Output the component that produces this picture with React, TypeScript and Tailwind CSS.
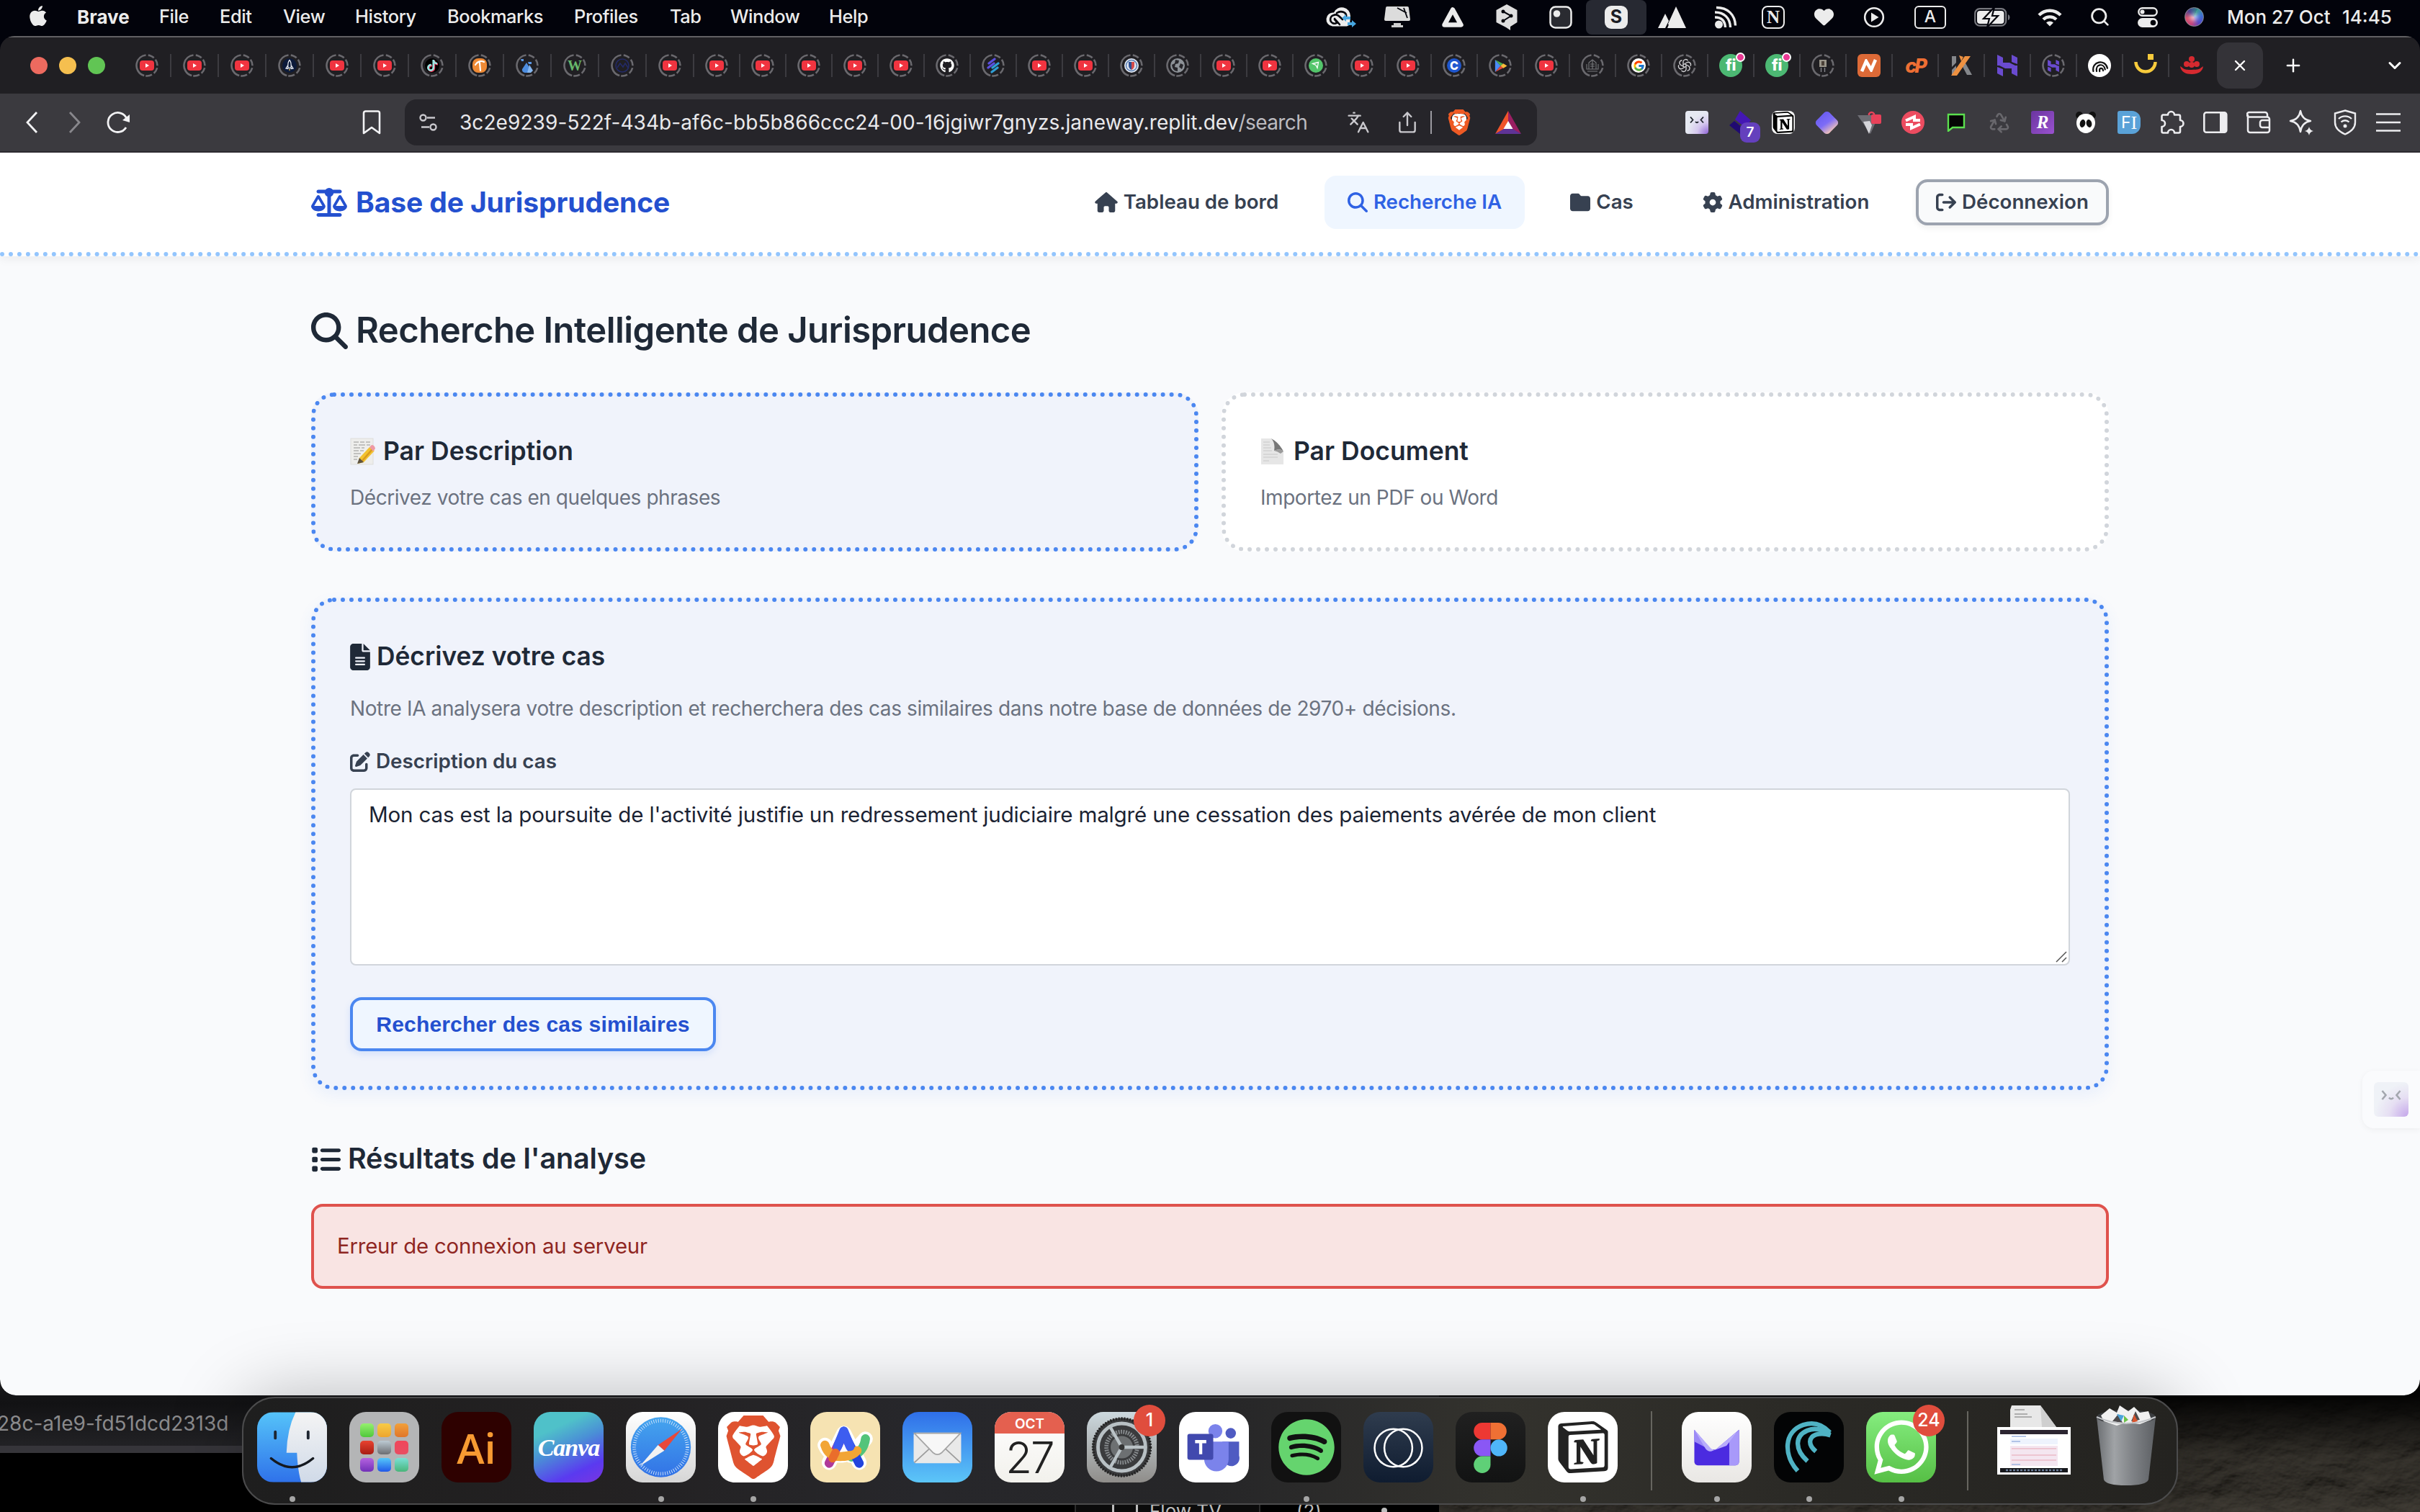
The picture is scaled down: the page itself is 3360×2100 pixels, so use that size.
import type { ReactNode } from "react";
import {
  FaApple, FaBrave, FaGithub, FaTiktok, FaScaleBalanced, FaMagnifyingGlass, FaHouse, FaFolder, FaGear,
  FaArrowRightFromBracket, FaFileLines, FaPenToSquare, FaList, FaWhatsapp, FaSpotify, FaHeart,
} from "react-icons/fa6";
import { FcGoogle } from "react-icons/fc";
import { SiNotion } from "react-icons/si";
import { ChevronDown, Globe, Languages, Plus, Puzzle, Recycle, Search, Share, Wallet, X } from "lucide-react";

/* ---------- macOS menu bar ---------- */

const MENUS: [string, string][] = [
  ["File", "w-[84px]"],
  ["Edit", "w-[88px]"],
  ["View", "w-[100px]"],
  ["History", "w-[128px]"],
  ["Bookmarks", "w-[176px]"],
  ["Profiles", "w-[133px]"],
  ["Tab", "w-[84px]"],
  ["Window", "w-[137px]"],
  ["Help", "w-[60px]"],
];

function Slot({ className, children }: { className: string; children: ReactNode }) {
  return <span className={`flex h-[50px] w-11 shrink-0 items-center justify-center ${className}`}>{children}</span>;
}

function MenuBar() {
  return (
    <div className="flex h-[50px] shrink-0 items-center bg-[#02030b] pr-[39px] pb-[3px] text-[#ececec]">
      <FaApple className="mb-1 ml-[37px] h-8 w-8" />
      <span className="ml-[38px] w-[114px] text-[26px] font-bold">Brave</span>
      {MENUS.map(([label, width]) => (
        <span key={label} className={`${width} shrink-0 text-[25.4px] font-medium tracking-[-0.4px]`}>{label}</span>
      ))}
      <div className="ml-auto flex items-center">
        <Slot className="">
          <svg viewBox="0 0 44 32" className="h-8 w-11" fill="none">
            <path d="M10 28.500a9 9 0 0 1 2-19 12 12 0 0 1 23 5l-1 12-4 2z" fill="#ececec" />
            <path d="M12 13a6 6 0 0 0-2 11c5 2 8 0 3-5m-1-6c4-2 7 1 12 6M16 10c6-4 14-1 13 5M20 26l-7-8" stroke="#02030b" strokeWidth="2.600" strokeLinecap="round" />
            <path d="M23 17l6-5v3h6v4h-6v3z" fill="#47a6e0" />
            <path d="M43 25l-6-5v3h-6v4h6v3z" fill="#47a6e0" />
          </svg>
        </Slot>
        <Slot className="ml-[34px]">
          <svg viewBox="0 0 36 30" className="h-[30px] w-9">
            <path d="M4 0h28a2 2 0 0 1 2 2l2 16a2 2 0 0 1-2 2H2a2 2 0 0 1-2-2L2 2a2 2 0 0 1 2-2z" fill="#dcdcdc" />
            <path d="M13 23h10v3h3v3H10v-3h3z" fill="#cfcfcf" />
            <path d="M18 2l13 7M27 2l5 14" stroke="#02030b" strokeWidth="1.800" fill="none" />
          </svg>
        </Slot>
        <Slot className="ml-[33px]">
          <svg viewBox="0 0 32 30" className="h-[30px] w-8">
            <path d="M16 4.500L27.500 25.500H4.500z" fill="none" stroke="#ececec" strokeWidth="6.500" strokeLinejoin="round" />
          </svg>
        </Slot>
        <Slot className="ml-[31px]">
          <svg viewBox="0 0 32 38" className="h-[38px] w-8">
            <path d="M16 1l14.500 8v17L21 32v5l-6-4L1.500 26V9z" fill="#dedede" />
            <path d="M11 11l11 6-11 7" fill="none" stroke="#02030b" strokeWidth="2" />
            <circle cx="11" cy="11" r="2.500" fill="#02030b" /><circle cx="22" cy="17" r="2.500" fill="#02030b" /><circle cx="11" cy="24" r="2.500" fill="#02030b" />
          </svg>
        </Slot>
        <Slot className="ml-[31px]">
          <svg viewBox="0 0 32 32" className="h-8 w-8">
            <rect x="1.500" y="1.500" width="29" height="29" rx="7" fill="#2a2b31" stroke="#ececec" strokeWidth="2.500" />
            <circle cx="10.500" cy="11" r="4.800" fill="#ececec" />
          </svg>
        </Slot>
        <span className="ml-[13px] flex h-[48px] w-[84px] items-center justify-center rounded-lg bg-[#272932]">
          <span className="flex h-8 w-8 items-center justify-center rounded-[9px] bg-[#ececec] text-[25px] font-bold text-[#1c1d24]">S</span>
        </span>
        <Slot className="ml-[14px]">
          <svg viewBox="0 0 40 30" className="h-[30px] w-10">
            <path d="M25 0l14 30H17l-3-6zM10 10l5 10-5 10H0zM15.500 24l2.500 6h-5z" fill="#ececec" />
          </svg>
        </Slot>
        <Slot className="ml-[30px]">
          <svg viewBox="0 0 32 32" className="h-8 w-8" fill="none" stroke="#ececec" strokeWidth="3.400">
            <circle cx="6.500" cy="26" r="5.500" fill="#ececec" stroke="none" />
            <path d="M1 16c9 0 14 5 14.500 14M1 9c13 0 21 8 21.500 21M3 2.500c16 0 26 10 26.500 25" />
          </svg>
        </Slot>
        <Slot className="ml-[22px]">
          <span className="flex h-8 w-8 items-center justify-center rounded-lg border-[2.500px] border-[#ececec] font-['Liberation_Serif'] text-[25px] font-bold">N</span>
        </Slot>
        <Slot className="ml-[26px]"><FaHeart className="h-[27px] w-[27px]" /></Slot>
        <Slot className="ml-[26px]">
          <svg viewBox="0 0 30 30" className="h-[30px] w-[30px]"><circle cx="15" cy="15" r="12.800" fill="none" stroke="#ececec" strokeWidth="2.600" /><path d="M11 8.500v13L21.500 15z" fill="#ececec" /></svg>
        </Slot>
        <Slot className="ml-[34px]">
          <span className="flex h-8 w-11 items-center justify-center rounded-[6px] border-[2.500px] border-[#ececec] text-[23px] font-medium">A</span>
        </Slot>
        <Slot className="ml-[42px]">
          <svg viewBox="0 0 50 26" className="h-[26px] w-[50px] shrink-0 overflow-visible">
            <rect x="1.200" y="1.200" width="43" height="23.500" rx="6.500" fill="none" stroke="#77787e" strokeWidth="2.200" />
            <path d="M47 9v8q2.500-1 2.500-4T47 9z" fill="#77787e" />
            <rect x="4" y="4" width="37.500" height="18" rx="4" fill="#ececec" />
            <path d="M28-1L13 15h8l-3 12 15-16h-8z" fill="#ececec" stroke="#02030b" strokeWidth="2.200" />
          </svg>
        </Slot>
        <Slot className="ml-9">
          <svg viewBox="0 0 34 26" className="h-[26px] w-[34px]" fill="none" stroke="#ececec" strokeWidth="4.400">
            <path d="M2 10a21 21 0 0 1 30 0M8 16a13 13 0 0 1 18 0" /><path d="M17 25.500l-5-5a7 7 0 0 1 10 0z" fill="#ececec" stroke="none" />
          </svg>
        </Slot>
        <Slot className="ml-[25px]"><Search className="h-[29px] w-[29px]" strokeWidth={2.300} /></Slot>
        <Slot className="ml-[23px]">
          <svg viewBox="0 0 28 28" className="h-7 w-7">
            <rect x="1.300" y="1.300" width="25.400" height="10.400" rx="5.200" fill="none" stroke="#ececec" strokeWidth="2.400" /><circle cx="6.500" cy="6.500" r="3" fill="#ececec" />
            <rect y="15" width="28" height="13" rx="6.500" fill="#ececec" /><circle cx="21.500" cy="21.500" r="3.800" fill="#02030b" />
          </svg>
        </Slot>
        <Slot className="ml-5">
          <span className="flex h-[27px] w-[27px] items-center justify-center rounded-full border border-[#8b8f98] bg-[conic-gradient(from_20deg,#3b9a8c,#3d6fd6,#5146c4,#c23f78,#d8506a,#4a3f8e,#2d7f8c)]">
            <span className="h-2.5 w-2.5 rounded-full bg-white/80 blur-[3px]" />
          </span>
        </Slot>
        <span className="ml-6 w-40 text-[26px] font-medium">Mon 27 Oct</span>
        <span className="w-[69px] text-[26px] font-medium">14:45</span>
      </div>
    </div>
  );
}

/* ---------- browser tabs ---------- */

function YouTube() {
  return <svg viewBox="0 0 20 14" className="h-3.5 w-5"><rect width="20" height="14" rx="4" fill="#f03440" /><path d="M8 4v6l5-3z" fill="#fff" /></svg>;
}

function HMark() {
  return <svg viewBox="0 0 28 30" className="h-full w-full" fill="#6a4bd0"><path d="M0 0l8 4v7h9l8 4H0zM28 30l-8-4v-7h-9l-8-4h25zM20 0l8 4v9l-8-3zM0 17l8 3v10l-8-4z" /></svg>;
}

function Favicon({ kind }: { kind: string }) {
  switch (kind) {
    case "yt": return <YouTube />;
    case "rocket": return <svg viewBox="0 0 20 20" className="h-5 w-5"><circle cx="10" cy="10" r="10" fill="#0c1a3a" /><path d="M10 2.500c3 3 2.500 7 2 11H8c-.5-4-1-8 2-11zM7.500 10L5 14l3 .5M12.500 10l2.500 4-3 .5" fill="none" stroke="#e6e9ef" strokeWidth="1.300" /><path d="M9 15h2l-1 3z" fill="#e8c24a" /></svg>;
    case "tiktok": return <span className="flex h-5 w-5 items-center justify-center rounded-full bg-black"><FaTiktok className="h-4 w-4 text-[#9fe6e4] drop-shadow-[1px_1px_0_#ee3355]" /></span>;
    case "pick": return <svg viewBox="0 0 20 20" className="h-5 w-5"><rect width="20" height="20" rx="8" fill="#ef8a35" /><path d="M4 9c3-5 8-6 12-4M10 6l1 11" stroke="#fff" strokeWidth="2.200" fill="none" strokeLinecap="round" /></svg>;
    case "drop": return <svg viewBox="0 0 20 20" className="h-5 w-5"><path d="M9 6l6 10a4 4 0 0 1-4 4H7a4 4 0 0 1-4-5z" fill="#4d8de0" /><path d="M13 9l5 8-3 3h-5z" fill="#86b7f0" /><path d="M1 1h4v3H2zM11 5h5v3h-4z" fill="#5a97e6" /></svg>;
    case "w": return <span className="font-['Liberation_Serif'] text-[20px] leading-none font-bold text-[#67b86a]">W</span>;
    case "navy": return <svg viewBox="0 0 20 20" className="h-5 w-5" fill="none" stroke="#232a66" strokeWidth="1.600"><circle cx="10" cy="10" r="9" /><path d="M3 13l4-6 4 5 3-5 4 6" /></svg>;
    case "github": return <FaGithub className="h-5 w-5 text-white" />;
    case "strips": return <svg viewBox="0 0 20 22" className="h-[22px] w-5" strokeWidth="3.200" strokeLinecap="round"><path d="M4 8l8-6M3 14l8-6" stroke="#5b4fe0" /><path d="M9 14l8-6M8 20l8-6" stroke="#2f9fd6" /></svg>;
    case "seal": return <svg viewBox="0 0 20 20" className="h-5 w-5"><circle cx="10" cy="10" r="10" fill="#dfe5ef" /><circle cx="10" cy="10" r="7.500" fill="none" stroke="#5b7fb4" strokeWidth="1.500" /><path d="M6 5h4v11q-4-2-4-6z" fill="#2c4f94" /><path d="M10 5h4v5q0 4-4 6z" fill="#d34a4a" /></svg>;
    case "globe": return <span className="flex h-5 w-5 items-center justify-center rounded-full bg-[#8d9298]"><svg viewBox="0 0 20 20" className="h-5 w-5" fill="#26252a"><path d="M7 2l5 1-1 4-4 1-1 4 4 1v5Q3 18 2 9l4-2zM14 7l4 2-2 6-4-3z" /></svg></span>;
    case "send": return <svg viewBox="0 0 20 20" className="h-5 w-5"><circle cx="10" cy="10" r="10" fill="#53c56b" /><path d="M5.500 7.500l8-2-1.500 8-2-4z" fill="none" stroke="#fff" strokeWidth="1.300" /></svg>;
    case "c": return <span className="flex h-5 w-5 items-center justify-center rounded-full bg-[#1f57cf] text-[16px] font-extrabold text-white">C</span>;
    case "play": return <svg viewBox="0 0 20 20" className="h-[19px] w-[19px]"><path d="M2 1l8 9-8 9z" fill="#4c8bf5" /><path d="M2 1l12 6-4 3z" fill="#4caf50" /><path d="M2 19l12-6-4-3z" fill="#e2493b" /><path d="M14 6.500l5.500 3.500-5.500 3.500-4-3.500z" fill="#fbbc3a" /></svg>;
    case "tower": return <svg viewBox="0 0 20 20" className="h-5 w-5" fill="none" stroke="#77787c" strokeWidth="1.100"><path d="M5 15V6l5-4 5 4v9M7 8h6M7 11h6M2 8v7h16V8M10 3v12M3 18h14" /></svg>;
    case "google": return <span className="flex h-5 w-5 items-center justify-center rounded-full bg-white"><FcGoogle className="h-[17px] w-[17px]" /></span>;
    case "openai": return <svg viewBox="0 0 20 20" className="h-5 w-5" fill="none" stroke="#d8d8da" strokeWidth="1.300">{[0, 60, 120, 180, 240, 300].map((a) => <path key={a} d="M8 11V4.500a3.500 3.500 0 0 1 6.500-1.200" transform={`rotate(${a} 10 10)`} />)}</svg>;
    case "pic": return <svg viewBox="0 0 20 24" className="h-6 w-5"><rect x="5" y="4" width="10" height="10" fill="#9a958a" /><path d="M8 6h4v6H8z" fill="#4b4138" /><path d="M7.500 15v6M12.500 15v6" stroke="#85878b" strokeWidth="1.400" /></svg>;
    case "h": return <span className="h-[17px] w-4"><HMark /></span>;
    default: return <Globe className="h-5 w-5" />;
  }
}

const RINGED = [
  "yt", "yt", "yt", "rocket", "yt", "yt", "tiktok", "pick", "drop", "w", "navy",
  "yt", "yt", "yt", "yt", "yt", "yt", "github", "strips", "yt", "yt", "seal", "globe", "yt", "yt", "send", "yt", "yt",
  "c", "play", "yt", "tower", "google", "openai",
];

function Tab({ wide, last, children }: { wide?: boolean; last?: boolean; children: ReactNode }) {
  return (
    <div className={`flex h-8 shrink-0 items-center justify-center border-r-2 ${wide ? "w-[66px]" : "w-16"} ${last ? "border-transparent" : "border-[#3c3b40]"}`}>
      {children}
    </div>
  );
}

function Ringed({ kind }: { kind: string }) {
  return (
    <span className="relative flex h-8 w-8 items-center justify-center">
      <svg viewBox="0 0 32 32" className="absolute inset-0 h-8 w-8">
        <circle cx="16" cy="16" r="14.500" fill="none" stroke="#6a696e" strokeWidth="2.600" strokeDasharray="40 3.200 8.900 3.200 8.900 3.200 8.900 3.200 8.900 2.700" transform="rotate(105 16 16)" />
      </svg>
      <Favicon kind={kind} />
    </span>
  );
}

function Fi() {
  return (
    <span className="relative flex h-8 w-8 items-center justify-center rounded-full bg-[#4cb873] text-[21px] font-extrabold tracking-[-0.500px] text-white">
      fi<span className="absolute -top-0.5 -right-1 h-[13px] w-[13px] rounded-full border-2 border-white bg-[#ea3a94]" />
    </span>
  );
}

function TabStrip() {
  return (
    <div className="flex h-20 items-center border-t-2 border-[#616063] bg-[#201f23]">
      <div className="ml-[42px] flex gap-4">
        <span className="h-6 w-6 rounded-full bg-[#ed6a5f]" />
        <span className="h-6 w-6 rounded-full bg-[#f5bf4f]" />
        <span className="h-6 w-6 rounded-full bg-[#61c554]" />
      </div>
      <div className="ml-[26px] flex">
        {RINGED.map((kind, i) => <Tab key={i} wide={i < 12}><Ringed kind={kind} /></Tab>)}
        <Tab><Fi /></Tab>
        <Tab><Fi /></Tab>
        <Tab><Ringed kind="pic" /></Tab>
        <Tab><span className="flex h-8 w-8 items-center justify-center rounded-md bg-[#dd6a37]"><svg viewBox="0 0 24 18" className="h-[18px] w-6"><path d="M2 17L8 3l7 12 6-14" fill="none" stroke="#fff" strokeWidth="4.500" /></svg></span></Tab>
        <Tab><span className="text-[27px] leading-none font-extrabold tracking-[-3px] text-[#ee6f34] italic">cP</span></Tab>
        <Tab><svg viewBox="0 0 32 32" className="h-8 w-8"><path d="M3 3h6v9l-6 6zM3 22l6-6v13H3zM16 14l5-3 10 18h-7z" fill="#85878b" /><path d="M2 30L21 3h8L10 30zM13 2l6 2-3 6z" fill="#ee9141" /></svg></Tab>
        <Tab><span className="h-[30px] w-7"><HMark /></span></Tab>
        <Tab><Ringed kind="h" /></Tab>
        <Tab><svg viewBox="0 0 32 32" className="h-8 w-8"><circle cx="16" cy="16" r="16" fill="#fff" /><path d="M6 22C6 8 26 8 26 22M10.500 23c0-10 12-10 12 0M14.500 24c0-5 5-5 5 0" fill="none" stroke="#111" strokeWidth="2.200" strokeLinecap="round" transform="rotate(-12 16 16)" /></svg></Tab>
        <Tab><svg viewBox="0 0 32 32" className="h-8 w-8"><path d="M2.500 11a13.500 13.500 0 0 0 27 0" fill="none" stroke="#f7cb3c" strokeWidth="4.500" /><rect x="19" y="0" width="8" height="8" fill="#f7cb3c" /></svg></Tab>
        <Tab last><svg viewBox="0 0 32 32" className="h-8 w-8" fill="#d62a30"><path d="M0 17c5 3 4 5 16 5s11-2 16-5c-1 8-8 11-16 11S1 25 0 17z" /><circle cx="16" cy="7" r="4" /><circle cx="9" cy="14" r="4" /><circle cx="23" cy="14" r="4" /><circle cx="16" cy="15" r="4" /></svg></Tab>
      </div>
      <span className="ml-0.5 flex h-16 w-16 items-center justify-center rounded-2xl bg-[#343338] text-white"><X className="h-6 w-6" strokeWidth={2.400} /></span>
      <Plus className="ml-[28px] h-7 w-7 text-white" strokeWidth={2.100} />
      <ChevronDown className="mr-[21px] ml-auto h-7 w-7 text-white" strokeWidth={2.600} />
    </div>
  );
}

/* ---------- browser toolbar ---------- */

function Face() {
  return (
    <span className="flex h-8 w-8 justify-center rounded-[4px] bg-[radial-gradient(circle_at_100%_100%,#8f63d6,#d5c8ee_35%,#e6e9f2_65%)]">
      <svg viewBox="0 0 20 10" className="mt-2 h-2.5 w-5" fill="none" stroke="#20242e" strokeWidth="1.800"><path d="M1 .5l3.500 4L1 8.500M19 .5l-3.500 4L19 8.500M8 7q2 2.500 4 0" /></svg>
    </span>
  );
}

function Ext({ children }: { children: ReactNode }) {
  return <span className="relative flex h-10 w-[60px] items-center justify-center text-[#ededf0]">{children}</span>;
}

function Toolbar() {
  return (
    <div className="flex h-[82px] items-center border-b-2 border-[#2c2a2f] bg-[#3b3a3f] text-[#f2f2f4]">
      <svg viewBox="0 0 18 30" className="ml-[35px] h-[30px] w-[18px]" fill="none" stroke="currentColor" strokeWidth="2.800"><path d="M16 1L3 15l13 14" /></svg>
      <svg viewBox="0 0 18 30" className="ml-[42px] h-[30px] w-[18px] text-[#88878c]" fill="none" stroke="currentColor" strokeWidth="2.800"><path d="M2 1l13 14L2 29" /></svg>
      <svg viewBox="0 0 34 32" className="ml-[34px] h-8 w-[34px]" fill="none" stroke="currentColor" strokeWidth="2.800"><path d="M28 23a13.500 13.500 0 1 1 1-12" /><path d="M33 5v11l-10-3z" fill="currentColor" stroke="none" /></svg>
      <svg viewBox="0 0 26 34" className="ml-[322px] h-[34px] w-[26px]" fill="none" stroke="currentColor" strokeWidth="2.600" strokeLinejoin="round"><path d="M2 4a2.500 2.500 0 0 1 2.500-2.500h17A2.500 2.500 0 0 1 24 4v28l-11-8-11 8z" /></svg>
      <div className="ml-[33px] flex h-16 w-[1572px] items-center rounded-2xl bg-[#26252a] text-[#c9c8cd]">
        <svg viewBox="0 0 26 24" className="ml-5 h-6 w-[26px]" fill="none" stroke="currentColor" strokeWidth="2.400"><circle cx="5.500" cy="5.500" r="4" /><path d="M11 5.500h11M3 18.500h11" /><circle cx="19.500" cy="18.500" r="4" /></svg>
        <span className="ml-[30px] text-[28px] tracking-[0.080px] whitespace-nowrap text-[#e9e9ec]">3c2e9239-522f-434b-af6c-bb5b866ccc24-00-16jgiwr7gnyzs.janeway.replit.dev</span>
        <span className="text-[28px] tracking-[-0.600px] text-[#bcbbc0]">/search</span>
        <Languages className="ml-auto h-8 w-8" strokeWidth={1.800} />
        <Share className="ml-[36px] h-8 w-8" strokeWidth={1.800} />
        <span className="ml-[16px] h-8 w-0.5 bg-[#9b9aa0]" />
        <span className="relative ml-[20px] flex h-9 w-9 items-center justify-center">
          <span className="absolute h-6 w-5 rounded-md bg-white" />
          <FaBrave className="relative h-9 w-9 text-[#ee5a24]" />
        </span>
        <svg viewBox="0 0 36 32" className="mr-[22px] ml-[32px] h-8 w-9"><path d="M18 0L0 32l13-7 5-9z" fill="#f0542b" /><path d="M18 0l18 32-13-7-5-9z" fill="#9a1f63" /><path d="M0 32h36l-12-7H12z" fill="#5f3396" /><path d="M18 14l6.500 11h-13z" fill="#fff" /></svg>
      </div>
      <div className="mr-[14px] ml-auto flex">
        <Ext><Face /></Ext>
        <Ext>
          <svg viewBox="0 0 32 32" className="h-8 w-8"><path d="M16 0l15 13-8 10L9 12z" fill="#4417b4" /><path d="M8 14l12 10-4 8L1 20z" fill="#200a72" /></svg>
          <span className="absolute top-5 left-[30px] flex h-7 w-7 items-center justify-center rounded-[9px] bg-[#6440bd] text-[19px] font-semibold text-white">7</span>
        </Ext>
        <Ext><span className="flex h-8 w-8 items-center justify-center rounded-lg bg-white"><SiNotion className="h-[30px] w-[30px] text-black" /></span></Ext>
        <Ext><span className="h-[25px] w-[25px] rotate-45 rounded-[5px] bg-[linear-gradient(100deg,#6a5cf0,#7d6cf7_50%,#f6c7b4)]" /></Ext>
        <Ext><svg viewBox="0 0 34 32" className="h-8 w-[34px]"><path d="M0 6h20l6 8-8 18z" fill="#6d6d74" /><path d="M8 15l9-1 3 6-4 12z" fill="#d5d5da" /><rect x="19" y="5" width="14" height="13" rx="2" fill="#e8425a" /><path d="M16 6V4a4 4 0 0 1 7 0v2" stroke="#e8425a" strokeWidth="2.400" fill="none" /></svg></Ext>
        <Ext><svg viewBox="0 0 32 32" className="h-8 w-8"><circle cx="16" cy="16" r="16" fill="#ec4c60" /><path d="M6 13.500l12-5.500v5h8M26 18.500L14 24v-5H6" stroke="#fff" strokeWidth="4" fill="none" /></svg></Ext>
        <Ext><svg viewBox="0 0 26 26" className="h-[26px] w-[26px]"><path d="M2 2h22v18H8l-6 5z" fill="#050505" stroke="#5be04e" strokeWidth="2.400" /></svg></Ext>
        <Ext><Recycle className="h-8 w-8 text-[#68676c]" strokeWidth={2} /></Ext>
        <Ext><span className="flex h-8 w-8 items-center justify-center rounded-[3px] bg-[linear-gradient(135deg,#6a35a0,#9a52cf)] font-['Liberation_Serif'] text-[25px] font-bold text-white italic">R</span></Ext>
        <Ext><svg viewBox="0 0 32 32" className="h-8 w-8"><circle cx="7" cy="6" r="5" fill="#111" /><circle cx="25" cy="6" r="5" fill="#111" /><path d="M16 4c9 0 13 6 13 13s-6 14-13 14S3 24 3 17 7 4 16 4z" fill="#fff" /><ellipse cx="11.500" cy="17.500" rx="3.800" ry="5.500" fill="#111" transform="rotate(12 11.500 17.500)" /><ellipse cx="20.500" cy="17.500" rx="3.800" ry="5.500" fill="#111" transform="rotate(-12 20.500 17.500)" /></svg></Ext>
        <Ext><span className="flex h-8 w-8 items-center justify-center rounded-l-[3px] rounded-r-xl bg-[#5aa2d8] text-[23px] text-white">F<span className="font-['Liberation_Serif'] text-[26px]">I</span></span></Ext>
        <Ext>
          <svg viewBox="0 0 34 34" className="h-[34px] w-[34px]" fill="none" stroke="currentColor" strokeWidth="2.600" strokeLinejoin="round"><path d="M4 6.500h7a4.500 4.500 0 0 1 9 0h6a2 2 0 0 1 2 2V14a4.500 4.500 0 0 1 0 9v6.500a2 2 0 0 1-2 2h-6a4.500 4.500 0 0 0-9 0H4.500a2 2 0 0 1-2-2V23a4.500 4.500 0 0 0 0-9V8.500a2 2 0 0 1 1.500-2z" /></svg>
        </Ext>
        <Ext><svg viewBox="0 0 34 30" className="h-[30px] w-[34px]"><rect x="1.300" y="1.300" width="31" height="27.400" rx="3" fill="none" stroke="currentColor" strokeWidth="2.600" /><path d="M23 2h8v26h-8z" fill="currentColor" /></svg></Ext>
        <Ext>
          <svg viewBox="0 0 34 32" className="h-8 w-[34px]" fill="none" stroke="currentColor" strokeWidth="2.500" strokeLinejoin="round"><path d="M29 8V5a3 3 0 0 0-3-3H4a3 3 0 0 0 0 6.500h25a3 3 0 0 1 3 3V27a3 3 0 0 1-3 3H5a3 3 0 0 1-3-3V5M32 13H22a3 3 0 0 0-3 3v4a3 3 0 0 0 3 3h10" /></svg>
        </Ext>
        <Ext><svg viewBox="0 0 36 36" className="h-9 w-9" fill="none" stroke="currentColor" strokeWidth="2.500" strokeLinejoin="round"><path d="M16 2q2 12 14 14-12 2-14 15-2-13-14-15Q14 14 16 2z" /><path d="M28 24q1 5 6 6-5 1-6 6-1-5-6-6 5-1 6-6z" fill="currentColor" stroke="none" /></svg></Ext>
        <Ext><svg viewBox="0 0 32 36" className="h-9 w-8" fill="none" stroke="currentColor" strokeWidth="2.400"><path d="M16 1.500l14 4V18c0 8-6 13-14 16.500C8 31 2 26 2 18V5.500z" /><path d="M7 13a13 13 0 0 1 18 0M10.500 17.500a8 8 0 0 1 11 0" /><circle cx="16" cy="23" r="2.500" fill="currentColor" stroke="none" /></svg></Ext>
        <Ext><svg viewBox="0 0 34 26" className="h-[26px] w-[34px]" stroke="currentColor" strokeWidth="2.600"><path d="M0 1.500h34M0 13h34M0 24.500h34" /></svg></Ext>
      </div>
    </div>
  );
}

/* ---------- web page ---------- */

function NavLink({ className, icon, label }: { className: string; icon: ReactNode; label: string }) {
  return (
    <a className={`flex items-center justify-center gap-2 rounded-2xl text-[27.700px] font-semibold whitespace-nowrap ${className}`}>
      {icon}
      {label}
    </a>
  );
}

function Header() {
  return (
    <header className="relative flex h-36 items-center justify-between border-b-[6px] border-dotted border-[#93c5fd] bg-white px-[432px] shadow-[0_4px_12px_rgba(0,0,0,0.060)]">
      <div className="flex items-center gap-3 text-[39px] font-bold tracking-[-0.110px] text-[#2450cf]">
        <FaScaleBalanced className="h-10 w-[50px]" />
        Base de Jurisprudence
      </div>
      <nav className="flex items-center gap-8 text-[#374151]">
        <NavLink className="h-[74px] w-[319px]" icon={<FaHouse className="h-7 w-8" />} label="Tableau de bord" />
        <NavLink className="h-[74px] w-[278px] bg-[#eff6ff] text-[#2f62e4]" icon={<FaMagnifyingGlass className="h-7 w-7" />} label="Recherche IA" />
        <NavLink className="h-[74px] w-[150px]" icon={<FaFolder className="h-7 w-7" />} label="Cas" />
        <NavLink className="h-[74px] w-[297px]" icon={<FaGear className="h-7 w-7" />} label="Administration" />
        <NavLink className="h-16 w-[268px] border-4 border-[#9ca3af] bg-[#f9fafb] shadow-[0_4px_8px_rgba(0,0,0,0.060)]" icon={<FaArrowRightFromBracket className="h-7 w-7" />} label="Déconnexion" />
      </nav>
    </header>
  );
}

function MemoEmoji() {
  return (
    <svg viewBox="0 0 36 38" className="h-[38px] w-9">
      <rect x="1" y="1" width="31" height="36" fill="#eeeeec" stroke="#dededc" />
      <path d="M5 6h7m2 0h6m2 0h6M5 10h5m2 0h9m2 0h5M5 14h9m2 0h4M5 18h7m2 0h5M5 22h10M5 26h6M5 30h5" stroke="#b2b2b0" strokeWidth="1.700" />
      <path d="M27 13l7 5-15 16-8 2 2-8z" fill="#f2c230" />
      <path d="M31 16l-15 17" stroke="#d99a1e" strokeWidth="2.500" />
      <path d="M27 13l3-3q4 0 5 5l-3 4z" fill="#ee9aa4" />
      <path d="M13 28l-3 8 9-2z" fill="#5c5240" />
    </svg>
  );
}

function PageEmoji() {
  return (
    <svg viewBox="0 0 36 38" className="h-[38px] w-9">
      <path d="M1 1h14q8 6 17 18v18H1z" fill="#e6e6e6" />
      <path d="M15 1q6 6 4 17 8-4 13 1-6-12-17-18z" fill="#777" />
      <path d="M19 18q8-4 13 1l-4 3q-4-3-9-4z" fill="#9b9b9b" />
      <path d="M4 6h9M4 10h9M4 14h11M4 18h12M4 23h20M4 27h20M4 32h8" stroke="#d2d2d2" strokeWidth="1.700" />
    </svg>
  );
}

function ModeCard({ active, emoji, title, text }: { active?: boolean; emoji: ReactNode; title: string; text: string }) {
  return (
    <div className={`h-[221px] flex-1 rounded-[32px] border-[6px] border-dotted px-12 pt-[52px] ${active ? "border-[#4b87f0] bg-[#f0f3fb]" : "border-[#d1d5db] bg-white"}`}>
      <h3 className="flex h-12 items-center gap-2.5 text-[35.500px] font-semibold text-[#1f2937]">{emoji}{title}</h3>
      <p className="mt-5 h-10 text-[28px] leading-10 tracking-[-0.440px] text-[#6b7280]">{text}</p>
    </div>
  );
}

function Page() {
  return (
    <div className="relative flex-1 overflow-hidden rounded-b-[22px] bg-[#f9fafc]">
      <Header />
      <main className="px-[432px] pt-[70px]">
        <h1 className="flex h-[66px] items-center gap-[11px] text-[49px] font-semibold tracking-[-0.550px] text-[#1f2937]">
          <FaMagnifyingGlass className="h-[51px] w-[51px]" />
          Recherche Intelligente de Jurisprudence
        </h1>

        <div className="mt-[53px] flex gap-8">
          <ModeCard active emoji={<MemoEmoji />} title="Par Description" text="Décrivez votre cas en quelques phrases" />
          <ModeCard emoji={<PageEmoji />} title="Par Document" text="Importez un PDF ou Word" />
        </div>

        <section className="mt-16 h-[684px] rounded-[32px] border-[6px] border-dotted border-[#4b87f0] bg-[#f0f3fb] px-12 pt-[52px] shadow-[0_8px_20px_rgba(59,130,246,0.080)]">
          <h2 className="flex h-12 items-center gap-[9px] text-[35.300px] font-semibold text-[#1f2937]">
            <FaFileLines className="h-[37px] w-[28px]" />
            Décrivez votre cas
          </h2>
          <p className="mt-7 h-10 text-[28px] leading-10 tracking-[-0.385px] text-[#6b7280]">
            Notre IA analysera votre description et recherchera des cas similaires dans notre base de données de 2970+ décisions.
          </p>
          <label className="mt-[34px] flex h-10 items-center gap-2 text-[27.800px] font-semibold text-[#374151]">
            <FaPenToSquare className="h-7 w-7" />
            Description du cas
          </label>
          <div className="relative mt-[17px] h-[246px] rounded-lg border-2 border-[#d1d5db] bg-white px-6 pt-3 text-[29.600px] leading-[44px] tracking-[-0.180px] text-[#1b2333]">
            Mon cas est la poursuite de l'activité justifie un redressement judiciaire malgré une cessation des paiements avérée de mon client
            <svg viewBox="0 0 16 16" className="absolute right-0.5 bottom-0.5 h-4 w-4" stroke="#555" strokeWidth="1.500"><path d="M1 15L15 1M9 15l6-6" /></svg>
          </div>
          <button className="mt-11 h-[75px] w-[508px] rounded-2xl border-4 border-[#4b87f0] bg-[#eff6ff] font-['Liberation_Sans'] text-[30.100px] font-bold tracking-[0.130px] text-[#2450cf] shadow-[0_4px_10px_rgba(59,130,246,0.150)]">
            Rechercher des cas similaires
          </button>
        </section>

        <h2 className="mt-[71px] flex h-[50px] items-center gap-2.5 text-[39.500px] font-semibold tracking-[-0.150px] text-[#1f2937]">
          <FaList className="h-[41px] w-[41px]" />
          Résultats de l'analyse
        </h2>
        <div className="mt-[37px] flex h-[118px] items-center rounded-2xl border-4 border-[#df524d] bg-[#f9e4e3] pt-px pl-8 text-[29.400px] tracking-[-0.200px] text-[#8f2622]">
          Erreur de connexion au serveur
        </div>
      </main>
      <div className="absolute top-[1275px] right-0 flex h-20 w-20 items-center rounded-l-2xl bg-[#fafbfd] pl-4 shadow-[0_2px_8px_rgba(0,0,0,0.050)]">
        <span className="flex h-12 w-12 justify-center rounded-md bg-[radial-gradient(circle_at_100%_100%,#c3a5ea,#e6dff3_40%,#eff2f7_70%)]">
          <svg viewBox="0 0 28 14" className="mt-[11px] h-3.5 w-7" fill="none" stroke="#a3a7ae" strokeWidth="2.600"><path d="M1.500 1l5 6-5 6M26.500 1l-5 6 5 6M11 10.500q3 3.500 6 0" /></svg>
        </span>
      </div>
    </div>
  );
}

/* ---------- desktop behind the dock ---------- */

function Desktop() {
  return (
    <div className="absolute inset-x-0 bottom-0 flex h-[190px] bg-black">
      <div className="flex w-[1998px] flex-col">
        <div className="flex h-[108px] shrink-0 flex-col justify-end border-b-[10px] border-[#36353a] bg-[linear-gradient(#1b1b1d,#121214_40%,#222225)]">
          <span className="-ml-1 mb-[11px] text-[28px] leading-10 text-[#8a8a8c]">28c-a1e9-fd51dcd2313d</span>
        </div>
        <div className="mt-auto flex h-[10px] items-start overflow-hidden pl-[1492px] text-[26px] leading-[18px] text-[#d8d8d8]">
          <span className="flex h-5 w-[258px] gap-[30px] border-x-2 border-[#333] bg-[#0d0d0d] pl-[50px] whitespace-nowrap">
            <span className="h-5 w-[3px] bg-[#d8d8d8]" />
            <span className="h-5 w-[3px] bg-[#d8d8d8]" />
            <span className="-ml-3.5">Flow TV</span>
          </span>
          <span className="ml-[50px]">(2)</span>
          <span className="mt-1 ml-auto mr-[72px] h-2 w-2 rounded-full bg-[#d8d8d8]" />
        </div>
      </div>
      <svg className="h-[190px] flex-1">
        <filter id="rock" x="0" y="0" width="100%" height="100%">
          <feTurbulence type="fractalNoise" baseFrequency="0.014 0.020" numOctaves="5" seed="8" result="n" />
          <feDiffuseLighting in="n" surfaceScale="7" lightingColor="#59534a"><feDistantLight azimuth="250" elevation="42" /></feDiffuseLighting>
        </filter>
        <linearGradient id="shade" x1="0" y1="0" x2="0" y2="1"><stop offset="0.150" stopColor="#000" stopOpacity="0.950" /><stop offset="0.600" stopColor="#000" stopOpacity="0.350" /><stop offset="1" stopColor="#000" stopOpacity="0.250" /></linearGradient>
        <rect width="100%" height="100%" filter="url(#rock)" />
        <rect width="100%" height="100%" fill="url(#shade)" />
      </svg>
    </div>
  );
}

/* ---------- dock ---------- */

function Tile({ className, dot, badge, children }: { className: string; dot?: boolean; badge?: string; children?: ReactNode }) {
  return (
    <div className="relative flex h-[146px] w-[97px] shrink-0 flex-col items-center pt-[19px]">
      <div className={`flex h-[98px] w-[97px] items-center justify-center overflow-hidden rounded-[23px] ${className}`}>{children}</div>
      {badge && <span className="absolute top-[9px] -right-3 flex h-11 w-11 items-center justify-center rounded-full bg-[#e04d3d] text-[25px] font-medium text-white">{badge}</span>}
      {dot && <span className="absolute bottom-0.5 h-2 w-2 rounded-full bg-[#a5a5a5]" />}
    </div>
  );
}

const PADS = [
  "bg-[linear-gradient(#96f06e,#4fc83c)]", "bg-[linear-gradient(#f7cb45,#eda52e)]", "bg-[linear-gradient(#f2a03a,#e0762a)]",
  "bg-[linear-gradient(#e8422f,#a81d14)]", "bg-[linear-gradient(#bccad3,#6c6e72)]", "bg-[linear-gradient(#f0465a,#e84d62)]",
  "bg-[linear-gradient(#b563e0,#7130b8)]", "bg-[linear-gradient(#55c8fa,#2158e8)]", "bg-[linear-gradient(#79e0d6,#49b57a)]",
];

function Dock() {
  return (
    <div className="absolute top-[1940px] left-[336px] flex h-[150px] w-[2688px] items-start rounded-[46px] border-2 border-[#4b4b4c] bg-[linear-gradient(90deg,#1e1e1e,#232122_18%,#27272b_35%,#262628_50%,#33322d_65%,#2b2a26_80%,#242320)] shadow-[0_0_100px_rgba(0,0,0,0.270)]">
      <div className="ml-[19px] flex gap-[31px]">
        <Tile dot className="">
          <svg viewBox="0 0 100 100" className="h-full w-full">
            <defs><linearGradient id="fb" x1="0" y1="0" x2="0" y2="1"><stop stopColor="#55c3f9" /><stop offset="1" stopColor="#2f72ea" /></linearGradient><linearGradient id="fw" x1="0" y1="0" x2="0" y2="1"><stop stopColor="#f4f4f4" /><stop offset="1" stopColor="#d0dae8" /></linearGradient></defs>
            <rect width="100" height="100" fill="url(#fb)" />
            <path d="M55 0h45v100H63q-5-17-6-42H42Q43 24 55 0z" fill="url(#fw)" />
            <path d="M26 28v9M73 28v9" stroke="#1d2530" strokeWidth="4" strokeLinecap="round" />
            <path d="M20 66q30 25 60 0" fill="none" stroke="#15191f" strokeWidth="3.500" strokeLinecap="round" />
          </svg>
        </Tile>
        <Tile className="bg-[#b4b5b6]">
          <div className="grid grid-cols-3 gap-[5px]">
            {PADS.map((p) => <span key={p} className={`h-[19px] w-[19px] rounded-[5px] ${p}`} />)}
          </div>
        </Tile>
        <Tile className="bg-[#2e0100]"><span className="font-['Open_Sans'] text-[58px] font-semibold text-[#f79a32]">Ai</span></Tile>
        <Tile className="bg-[linear-gradient(155deg,#4fc1c9_25%,#4a8fd6_48%,#5a3af0_78%,#7a35e0)]"><span className="font-['Liberation_Serif'] text-[34px] font-bold tracking-[-1px] text-white italic">Canva</span></Tile>
        <Tile dot className="bg-[linear-gradient(#fff,#d6d6d6)]">
          <svg viewBox="0 0 100 100" className="h-full w-full">
            <defs><linearGradient id="sf" x1="0" y1="0" x2="0" y2="1"><stop stopColor="#45a5ee" /><stop offset="1" stopColor="#3272e6" /></linearGradient></defs>
            <circle cx="50" cy="50" r="43" fill="url(#sf)" />
            <circle cx="50" cy="50" r="38" fill="none" stroke="#d9e8fb" strokeWidth="5" strokeDasharray="0.900 2.400" />
            <path d="M80 24L55 55l-9-8z" fill="#e8483a" /><path d="M20 77l26-30 9 8z" fill="#f2f2f2" />
          </svg>
        </Tile>
        <Tile dot className="bg-white"><FaBrave className="h-[88px] w-[84px] text-[#df5330]" /></Tile>
        <Tile className="bg-[#f6e3b2]">
          <svg viewBox="0 0 100 100" className="h-full w-full" fill="none" strokeLinecap="round" strokeLinejoin="round">
            <path d="M48 30l22 42M48 30L27 72M79 38L58 62M21 47q8 18 28 14" stroke="#fff" strokeWidth="21" />
            <path d="M79 38q-2 18-20 26" stroke="#53c47a" strokeWidth="13" />
            <path d="M48 30L27 73" stroke="#b0399a" strokeWidth="13" /><path d="M48 30l22 43" stroke="#2244dd" strokeWidth="13" />
            <path d="M21 47q6 19 28 16 12-1 18-8" stroke="#f2a535" strokeWidth="13" />
            <path d="M48 27l9 22M48 27l-9 22" stroke="#3d5df0" strokeWidth="13" />
            <path d="M36 58l-4 8" stroke="#ea6d2b" strokeWidth="12" />
          </svg>
        </Tile>
        <Tile className="bg-[linear-gradient(#2f6fe9,#5cc6f8)]">
          <svg viewBox="0 0 100 100" className="h-full w-full"><rect x="16" y="29" width="68" height="44" rx="4" fill="#e9e9e9" /><path d="M17 72l26-24M83 72L57 48" stroke="#9c9c9c" strokeWidth="1.800" /><path d="M17 30l27 28q6 5 12 0l27-28z" fill="#f7f7f7" stroke="#a5a5a5" strokeWidth="1.800" /></svg>
        </Tile>
        <Tile className="bg-[linear-gradient(#fff,#f2f1ec)]">
          <div className="flex h-full w-full flex-col items-center">
            <span className="flex h-[30px] w-full items-center justify-center bg-[#e4604f] pt-1 text-[19px] font-semibold text-white">OCT</span>
            <span className="mt-[3px] text-[60px] leading-[60px] font-light tracking-[-2px] text-[#222]">27</span>
          </div>
        </Tile>
        <Tile badge="1" className="bg-[linear-gradient(#ccd8de,#8f8d8a)]">
          <svg viewBox="0 0 100 100" className="h-full w-full" fill="none">
            <circle cx="50" cy="50" r="42" fill="#3a3b3d" /><circle cx="50" cy="50" r="41" stroke="#222" strokeWidth="4" strokeDasharray="2 2" />
            <circle cx="50" cy="50" r="34" stroke="#b8c0c4" strokeWidth="5" /><circle cx="50" cy="50" r="22" stroke="#85898c" strokeWidth="6" strokeDasharray="2 1.500" /><circle cx="50" cy="50" r="16" fill="#6d7072" />
            <path d="M50 50h32M50 50L34 22M50 50L34 78" stroke="#bac2c6" strokeWidth="4.500" /><circle cx="50" cy="50" r="4" fill="#333" />
          </svg>
        </Tile>
        <Tile className="bg-white">
          <svg viewBox="0 0 100 100" className="h-full w-full">
            <circle cx="74" cy="30" r="7.500" fill="#4f5bc2" /><path d="M62 42h24v20a11 11 0 0 1-22 7z" fill="#4f5bc2" />
            <circle cx="52" cy="27" r="10" fill="#7b83eb" /><path d="M36 42h35v25a17 17 0 0 1-35 0z" fill="#7b83eb" />
            <rect x="12" y="31" width="37" height="37" rx="3" fill="#4149ae" /><path d="M23 42h16M31 42v18" stroke="#fff" strokeWidth="4.500" />
          </svg>
        </Tile>
        <Tile dot className="bg-[#111]"><FaSpotify className="h-[80px] w-[80px] text-[#65d46e]" /></Tile>
        <Tile className="bg-[linear-gradient(#2f3c4e,#0f1c30)]"><svg viewBox="0 0 100 100" className="h-full w-full" fill="none" stroke="#fff" strokeWidth="2.600"><circle cx="43" cy="51" r="27" /><circle cx="57" cy="51" r="27" /></svg></Tile>
        <Tile className="bg-[linear-gradient(#202020,#121313)]">
          <svg viewBox="0 0 100 100" className="h-full w-full"><path d="M50 15H38a12 12 0 0 0 0 24h12z" fill="#ed3833" /><path d="M50 15h11a12 12 0 0 1 0 24H50z" fill="#ef7034" /><path d="M50 39H38a12 12 0 0 0 0 24h12z" fill="#8a57f5" /><circle cx="62" cy="51" r="12" fill="#4fb6f9" /><path d="M50 63H38a12 12 0 1 0 12 12z" fill="#5fd077" /></svg>
        </Tile>
        <Tile dot className="bg-white"><SiNotion className="h-[72px] w-[72px] text-[#222]" /></Tile>
      </div>
      <span className="mt-[18px] ml-[46px] h-[110px] w-0.5 bg-[#66655f]" />
      <div className="ml-[41px] flex gap-[31px]">
        <Tile dot className="bg-[linear-gradient(#fff,#e9e7e4)]">
          <svg viewBox="0 0 100 100" className="h-full w-full"><path d="M18 25l24 28 7 0 33-28v46a5 5 0 0 1-5 5H23a5 5 0 0 1-5-5z" fill="#4b2be0" /><path d="M18 25l25 30L18 42z" fill="#9d8bf7" /><path d="M82 25L68 42v34h9a5 5 0 0 0 5-5z" fill="#a899fa" /><path d="M18 25l24 27q4 3 8 0l32-27-18 23-22 8q-5 0-8-4z" fill="#b9adfc" /></svg>
        </Tile>
        <Tile dot className="bg-[#030405]">
          <svg viewBox="0 0 100 100" className="h-full w-full" fill="none" stroke="#4fb3c4" strokeWidth="6.500"><path d="M34 84C14 62 13 28 42 18q22-7 38 11" /><path d="M48 70C30 54 29 34 48 26q16-6 32 6" /><path d="M60 56C48 46 50 36 60 32q10-3 21 1" /></svg>
        </Tile>
        <Tile dot badge="24" className="bg-[linear-gradient(#85ed7f,#56bf45)]"><FaWhatsapp className="h-[86px] w-[86px] text-white" /></Tile>
      </div>
      <span className="mt-[18px] ml-[43px] h-[110px] w-0.5 bg-[#66655f]" />
      <svg viewBox="0 0 102 98" className="mt-[10px] ml-[40px] h-[98px] w-[102px] shrink-0">
        <path d="M20 0h40l22 30v4H18V6z" fill="#e8e8e8" /><path d="M60 0l2 30h20z" fill="#cfcfcf" /><path d="M24 6h14M24 12h18M24 16h24" stroke="#9a9a9a" strokeWidth="1.500" />
        <rect y="30" width="102" height="66" fill="#fff" /><rect x="4" y="34" width="94" height="6" fill="#2b2430" /><rect x="4" y="87" width="94" height="6" fill="#17181c" />
        <path d="M12 90h78" stroke="#6d7f9a" strokeWidth="2.500" strokeDasharray="3 2" />
        <rect x="18" y="46" width="66" height="8" fill="#eef3fd" /><rect x="18" y="56" width="66" height="28" fill="#f4e6f0" /><path d="M20 60h62M20 69h62M20 76h62" stroke="#eabcc8" strokeWidth="1.300" /><path d="M20 43h20M20 50h12M20 82h12" stroke="#9db4e0" strokeWidth="1.500" />
      </svg>
      <svg viewBox="0 0 86 112" className="mt-[10px] ml-[34px] h-[112px] w-[86px] shrink-0">
        <defs><linearGradient id="bin" x1="0" y1="0" x2="1" y2="0"><stop stopColor="#6b6e72" /><stop offset="0.300" stopColor="#a0a3a6" /><stop offset="0.600" stopColor="#808387" /><stop offset="1" stopColor="#5d6064" /></linearGradient></defs>
        <path d="M2 16q41-12 82 0L74 103q-3 8-31 8t-31-8z" fill="url(#bin)" />
        <ellipse cx="43" cy="16" rx="41" ry="10" fill="#3b3d40" />
        <path d="M8 14l12-10 10 6L34 0l12 8 8-6 8 8 12-2 4 12-16 6-20-2-12 4-18-6z" fill="#f1f1f1" />
        <path d="M24 22l8-10 6 12zM50 22l6-14 6 12z" fill="#4d4b4d" /><path d="M30 12l10 2-4 8z" fill="#4ba3d9" /><path d="M40 14l6 6-6 4z" fill="#6cc24a" /><path d="M54 12l5 10-8 2z" fill="#d9542d" />
        <path d="M2 16q41 18 82 0" fill="none" stroke="#c2c5c8" strokeWidth="2" />
      </svg>
    </div>
  );
}

export default function App() {
  return (
    <div className="relative flex h-[2100px] w-[3360px] flex-col overflow-hidden bg-[#02030b] font-['Inter',sans-serif]">
      <Desktop />
      <div className="relative"><MenuBar /></div>
      <div className="relative flex h-[1888px] shrink-0 flex-col overflow-hidden rounded-t-[20px] rounded-b-[22px]">
        <TabStrip />
        <Toolbar />
        <Page />
      </div>
      <Dock />
    </div>
  );
}
